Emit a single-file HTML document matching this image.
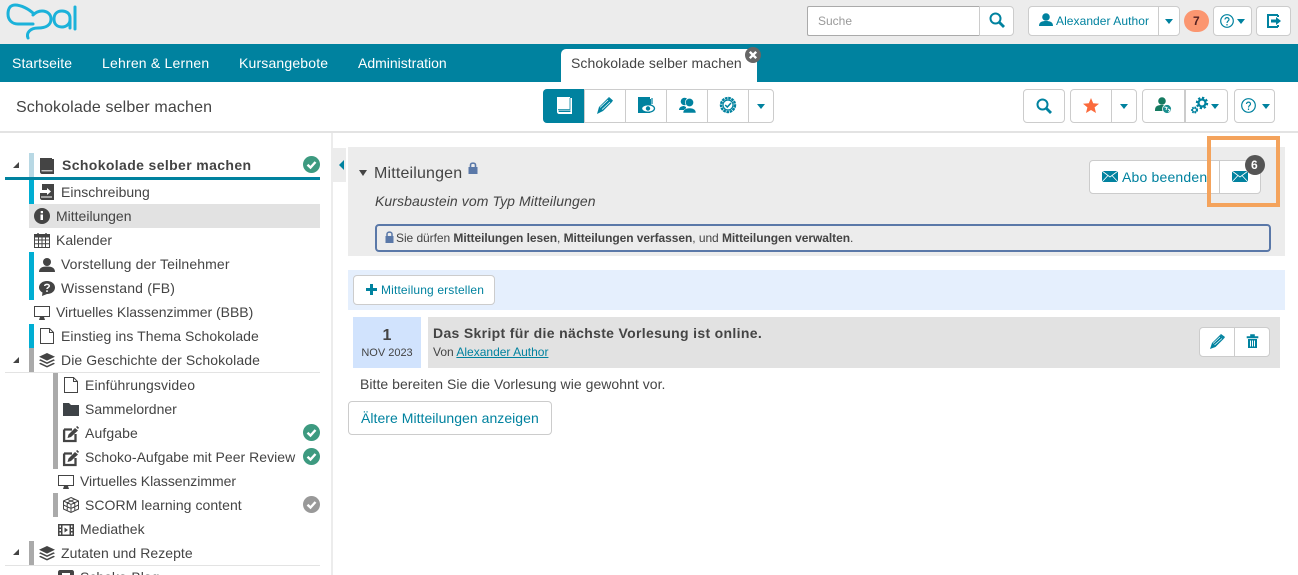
<!DOCTYPE html>
<html lang="de"><head><meta charset="utf-8"><title>Schokolade selber machen</title>
<style>
html,body{margin:0;padding:0;width:1298px;height:575px;overflow:hidden;background:#fff;font-family:"Liberation Sans",Arial,sans-serif;color:#444;font-size:14px}
#p{position:relative;width:1298px;height:575px;overflow:hidden;background:#fff}
.r{position:absolute;box-sizing:border-box}
.b{position:absolute;box-sizing:border-box;background:#fff;border:1px solid #ccc;border-radius:4px}
.t{position:absolute;white-space:nowrap;line-height:20px;font-size:14px;color:#444}
.n{position:absolute;white-space:nowrap;line-height:20px;font-size:14px;color:#fff;top:53px}
svg{position:absolute;overflow:visible}
.c{width:0;height:0;border-left:4.5px solid transparent;border-right:4.5px solid transparent;border-top:5px solid #00829f;position:absolute}
.tri{position:absolute;width:0;height:0;border-left:6px solid transparent;border-bottom:6px solid #444;left:13px}
</style></head><body><div id="p">
<div class="r" style="left:0;top:0;width:1298px;height:44px;background:#ececec"></div>
<div class="r" style="left:0;top:44px;width:1298px;height:38px;background:#00829f"></div>
<div class="r" style="left:0;top:131px;width:1298px;height:2px;background:#e3e3e3"></div>

<svg style="left:0;top:0" width="85" height="44" fill="none" stroke="#1bb2da" stroke-width="3" stroke-linecap="round"><path d="M34 14C29 9 21 5 15 5C10 5 8 9 8 14C8 20 12 24 18 24L33 24"/><path d="M28 38C26 33 30 28 38 28C46 28 51 25 51 19C51 14 47 11 42 11C38 11 35 13 33 15"/><path d="M70 28V18C70 13 66 11 62 11C57 11 54 14 54 19C54 24 57 27 62 27C66 27 70 24 70 20"/><path d="M75 7V29"/></svg>

<div class="r" style="left:807px;top:6px;width:173px;height:30px;background:#fff;border:1px solid #aaa;border-right:1px solid #bbb;border-radius:2px 0 0 2px"></div>
<div class="t" style="left:818px;top:11px;font-size:12px;color:#999">Suche</div>
<div class="b" style="left:979px;top:6px;width:35px;height:30px;border-radius:0 4px 4px 0"></div>
<svg style="left:989px;top:12px" width="16" height="16" fill="none" stroke="#00829f" stroke-width="2"><circle cx="6.5" cy="6.5" r="5"/><path d="M10 10L15 15" stroke-width="2.8"/></svg>
<div class="b" style="left:1028px;top:6px;width:152px;height:30px"></div>
<div class="r" style="left:1158px;top:6px;width:1px;height:30px;background:#ccc"></div>
<svg style="left:1039px;top:13px" width="14" height="13" fill="#00829f"><circle cx="7" cy="4" r="3.8"/><path d="M0 13C0 9 3 8 7 8S14 9 14 13Z"/></svg>
<div class="t" style="left:1056px;top:11px;font-size:12px;color:#00829f;letter-spacing:.06px">Alexander Author</div>
<div class="c" style="left:1165px;top:19px"></div>
<div class="r" style="left:1184px;top:10px;width:25px;height:22px;background:#fb9670;border-radius:11px"></div>
<div class="t" style="left:1193px;top:11px;font-size:12px;font-weight:bold;color:#522">7</div>
<div class="b" style="left:1213px;top:6px;width:39px;height:30px"></div>
<svg style="left:1220px;top:14px" width="14" height="14" fill="none" stroke="#00829f" stroke-width="1.2"><circle cx="7" cy="7" r="6.3"/><path d="M5 5.5C5 3 9 3 9 5.5C9 7 7 7 7 9M7 10V11.500"/></svg>
<div class="c" style="left:1237px;top:19px"></div>
<div class="b" style="left:1256px;top:6px;width:35px;height:30px"></div>
<svg style="left:1267px;top:14px" width="15" height="14" fill="none" stroke="#00829f" stroke-width="2"><path d="M11 1H1V13H11M11 1V3M11 11V13"/><path d="M4 7H9" stroke-width="3"/><path d="M9 3L14 7L9 11Z" fill="#00829f" stroke="none"/></svg>

<div class="n" style="left:12px;letter-spacing:.1px">Startseite</div>
<div class="n" style="left:102px;letter-spacing:.2px">Lehren &amp; Lernen</div>
<div class="n" style="left:239px;letter-spacing:.17px">Kursangebote</div>
<div class="n" style="left:358px">Administration</div>
<div class="r" style="left:561px;top:49px;width:196px;height:33px;background:#fff;border-radius:5px 5px 0 0"></div>
<div class="t" style="left:571px;top:53px;letter-spacing:.08px">Schokolade selber machen</div>
<svg style="left:745px;top:47px" width="16" height="16"><circle cx="8" cy="8" r="8" fill="#666"/><path d="M4.8 4.8L11.2 11.2M11.2 4.8L4.8 11.2" stroke="#fff" stroke-width="2.4"/></svg>

<div class="t" style="left:16px;top:97px;font-size:16px;line-height:22px;letter-spacing:.13px">Schokolade selber machen</div>

<div class="b" style="left:543px;top:89px;width:231px;height:34px"></div>
<div class="r" style="left:543px;top:89px;width:41px;height:34px;background:#00829f;border-radius:4px 0 0 4px"></div>
<div class="r" style="left:625px;top:89px;width:1px;height:34px;background:#ccc"></div>
<div class="r" style="left:584px;top:89px;width:1px;height:34px;background:#ccc"></div>
<div class="r" style="left:666px;top:89px;width:1px;height:34px;background:#ccc"></div>
<div class="r" style="left:707px;top:89px;width:1px;height:34px;background:#ccc"></div>
<div class="r" style="left:748px;top:89px;width:1px;height:34px;background:#ccc"></div>
<svg style="left:557px;top:97px" width="15" height="17" fill="#fff"><path d="M0 0H13V1H15V17H2C1 17 0 16 0 15Z"/><path d="M1.500 13.500H13.500V15H2C1.500 15 1.500 13.500 1.500 13.500Z" fill="#00829f"/><path d="M13 1V12.500H1" fill="none" stroke="#00829f" stroke-width=".8"/></svg>
<svg style="left:597px;top:97px" width="16" height="17" fill="#00829f"><path d="M0 17L2 10L11 1L15.5 4.5L6 14Z"/><path d="M3 10.5L11 3M5 12.5L13 5" stroke="#fff" stroke-width=".7"/><path d="M12 0L16 3.5L15 4.5L11 1Z"/></svg>
<svg style="left:638px;top:97px" width="17" height="17"><path d="M0 0H12V2H13V8H8L2 13L4 16H0Z" fill="#00829f"/><path d="M0 0H12V16H0Z" fill="#00829f"/><path d="M14 1V7" stroke="#00829f" stroke-width="1.200"/><ellipse cx="10" cy="11.500" rx="6.500" ry="3.800" fill="#fff" stroke="#00829f" stroke-width="1.300"/><circle cx="10" cy="11.500" r="2.200" fill="#00829f"/></svg>
<svg style="left:679px;top:97px" width="17" height="16" fill="#00829f"><circle cx="5.500" cy="4.500" r="3.800"/><path d="M0 13C0 10 3 9 5 9L7 10L4 13Z"/><path d="M3 13H7V10H3Z"/><circle cx="10.500" cy="5.500" r="4.200" stroke="#fff" stroke-width=".7"/><path d="M4 16C4 12.500 7 11 10.500 11S17 12.500 17 16Z" stroke="#fff" stroke-width=".5"/></svg>
<svg style="left:720px;top:97px" width="16" height="16"><circle cx="8" cy="8" r="7" fill="none" stroke="#00829f" stroke-width="2.4" stroke-dasharray="2.6 .7"/><circle cx="8" cy="8" r="5" fill="none" stroke="#00829f" stroke-width="1.2"/><path d="M5.2 8L7.3 10L11 6" fill="none" stroke="#00829f" stroke-width="1.5"/></svg>
<div class="c" style="left:757px;top:104px"></div>

<div class="b" style="left:1023px;top:89px;width:42px;height:34px"></div>
<svg style="left:1036px;top:98px" width="16" height="16" fill="none" stroke="#00829f" stroke-width="2"><circle cx="6.5" cy="6.5" r="5"/><path d="M10 10L15 15" stroke-width="2.8"/></svg>
<div class="b" style="left:1070px;top:89px;width:67px;height:34px"></div>
<div class="r" style="left:1111px;top:89px;width:1px;height:34px;background:#ccc"></div>
<svg style="left:1083px;top:98px" width="16" height="15" fill="#fb6a3c"><path d="M8 0L10.2 5.3L16 5.7L11.6 9.4L13 15L8 12L3 15L4.4 9.4L0 5.7L5.8 5.3Z"/></svg>
<div class="c" style="left:1120px;top:104px"></div>
<div class="b" style="left:1142px;top:89px;width:86px;height:34px"></div>
<div class="r" style="left:1184px;top:89px;width:2px;height:34px;background:#ccc"></div>
<svg style="left:1155px;top:97px" width="17" height="17"><circle cx="7" cy="4" r="3.800" fill="#157a60"/><path d="M0 13C0 9 3 8 7 8C10 8 11 9 11 9L8 14H0Z" fill="#157a60"/><circle cx="12" cy="12" r="4.500" fill="#1a8f8f" stroke="#fff" stroke-width=".8"/><path d="M9.500 10L12 10.500L11 13M13 12L15 13L13.500 15" fill="none" stroke="#fff"/></svg>
<svg style="left:1191px;top:97px" width="17" height="17" fill="none" stroke="#00829f"><circle cx="11" cy="6" r="5" stroke-width="2.400" stroke-dasharray="2.200 1.700"/><circle cx="11" cy="6" r="3.500" stroke-width="2.200"/><circle cx="3.500" cy="13" r="2.800" stroke-width="1.500" stroke-dasharray="1.500 1.100"/><circle cx="3.500" cy="13" r="2" stroke-width="1.300"/></svg>
<div class="c" style="left:1211px;top:104px"></div>
<div class="b" style="left:1234px;top:89px;width:41px;height:34px"></div>
<svg style="left:1241px;top:98px" width="15" height="15" fill="none" stroke="#00829f" stroke-width="1.2"><circle cx="7.5" cy="7.5" r="6.8"/><path d="M5.5 6C5.5 3.5 9.5 3.5 9.5 6C9.5 7.5 7.5 7.5 7.5 9.5M7.5 10.5V12"/></svg>
<div class="c" style="left:1262px;top:104px"></div>

<!-- sidebar -->
<div class="r" style="left:331px;top:133px;width:2px;height:442px;background:#ececec"></div>
<div class="r" style="left:333px;top:148px;width:13px;height:34px;background:#ececec"></div>
<div class="r" style="left:339px;top:160px;width:0;height:0;border-top:5px solid transparent;border-bottom:5px solid transparent;border-right:5px solid #00829f"></div>

<div class="tri" style="top:162px"></div>
<div class="r" style="left:29px;top:153px;width:5px;height:24px;background:#b8d8e4"></div>
<div class="r" style="left:5px;top:177px;width:315px;height:3px;background:#00829f"></div>
<svg style="left:40px;top:158px" width="14" height="16" fill="#444"><path d="M0 0H12V1H14V16H2C1 16 0 15 0 14Z"/><path d="M1.5 12.8H12.5" stroke="#fff"/></svg>
<div class="t" style="left:62px;top:155px;font-weight:bold;letter-spacing:.37px">Schokolade selber machen</div>
<svg style="left:303px;top:156px" width="17" height="17"><circle cx="8.5" cy="8.5" r="8.5" fill="#3d9a80"/><path d="M4.5 8.7L7.5 11.5L12.5 6" fill="none" stroke="#fff" stroke-width="2.4"/></svg>

<div class="r" style="left:29px;top:180px;width:5px;height:24px;background:#00aed3"></div>
<svg style="left:40px;top:184px" width="14" height="16" fill="#444"><path d="M2 0H14V16H2C1 16 0 15 0 14V9H7V11L11 7.5L7 4V6H2Z"/><path d="M1 13H12" stroke="#fff"/></svg>
<div class="t" style="left:61px;top:182px">Einschreibung</div>

<div class="r" style="left:29px;top:204px;width:291px;height:24px;background:#e2e2e2"></div>
<svg style="left:34px;top:208px" width="16" height="16"><circle cx="8" cy="8" r="8" fill="#444"/><path d="M6.5 6.5H9V12H6.5ZM6.7 3H9V5.2H6.7Z" fill="#fff"/></svg>
<div class="t" style="left:56px;top:206px">Mitteilungen</div>

<svg style="left:34px;top:233px" width="16" height="15" fill="none" stroke="#444"><path d="M.5 3H15.5V14.5H.5ZM.5 7H15.5M.5 10.7H15.5M4.5 3V14.5M8 3V14.5M11.5 3V14.5"/><path d="M.5 1.5H15.5V4H.5Z" fill="#444"/><path d="M4 0V2M12 0V2" stroke-width="1.4"/></svg>
<div class="t" style="left:56px;top:230px">Kalender</div>

<div class="r" style="left:29px;top:252px;width:5px;height:48px;background:#00aed3"></div>
<svg style="left:39px;top:258px" width="16" height="14" fill="#444"><circle cx="8" cy="4" r="4"/><path d="M0 14C0 10 3 8.500 8 8.500S16 10 16 14Z"/></svg>
<div class="t" style="left:61px;top:254px;letter-spacing:.12px">Vorstellung der Teilnehmer</div>
<svg style="left:39px;top:281px" width="16" height="15"><path d="M8 0C12.500 0 16 2.700 16 6.500S12.500 13 8 13L3 15L3.500 11.500C1.500 10.500 0 8.500 0 6.500C0 2.700 3.500 0 8 0Z" fill="#444"/><path d="M5.700 5C5.700 2.800 10.300 2.800 10.300 5C10.300 6.500 8 6.500 8 8M8 9.200V11" fill="none" stroke="#fff" stroke-width="1.500"/></svg>
<div class="t" style="left:61px;top:278px;letter-spacing:.18px">Wissenstand (FB)</div>

<svg style="left:34px;top:306px" width="16" height="14"><path d="M.5 .5H15.500V10.500H.5Z" fill="none" stroke="#444"/><path d="M5 14L6 11H10L11 14Z" fill="#444"/></svg>
<div class="t" style="left:56px;top:302px;letter-spacing:-.03px">Virtuelles Klassenzimmer (BBB)</div>

<div class="r" style="left:29px;top:324px;width:5px;height:24px;background:#00aed3"></div>
<svg style="left:40px;top:328px" width="14" height="16" fill="none" stroke="#444"><path d="M.5 .5H9.500L13.500 4.500V15.500H.5ZM9.500 .5V4.500H13.500"/></svg>
<div class="t" style="left:61px;top:326px;letter-spacing:.07px">Einstieg ins Thema Schokolade</div>

<div class="tri" style="top:357px"></div>
<div class="r" style="left:29px;top:348px;width:5px;height:24px;background:#aaa"></div>
<div class="r" style="left:5px;top:372px;width:315px;height:1px;background:#e3e3e3"></div>
<svg style="left:39px;top:353px" width="16" height="15" fill="#444"><path d="M8 0L16 3.800L8 7.600L0 3.800Z"/><path d="M1.500 6.300L8 9.400L14.500 6.300L16 7.300L8 11L0 7.300Z"/><path d="M1.500 9.800L8 12.900L14.500 9.800L16 10.800L8 14.500L0 10.800Z"/></svg>
<div class="t" style="left:61px;top:350px;letter-spacing:.1px">Die Geschichte der Schokolade</div>

<div class="r" style="left:53px;top:373px;width:5px;height:96px;background:#aaa"></div>
<svg style="left:64px;top:377px" width="14" height="16" fill="none" stroke="#444"><path d="M.5 .5H9.500L13.500 4.500V15.500H.5ZM9.500 .5V4.500H13.500"/></svg>
<div class="t" style="left:85px;top:375px;letter-spacing:.12px">Einführungsvideo</div>
<svg style="left:63px;top:403px" width="16" height="13" fill="#3e4347"><path d="M0 0H6L8 2H16V13H0Z"/></svg>
<div class="t" style="left:85px;top:399px">Sammelordner</div>
<svg style="left:63px;top:426px" width="16" height="16" fill="none" stroke="#444"><path d="M1 3.500H9M1.100 3.500V15H12.500V8" stroke-width="2.300"/><path d="M4.500 12L5.500 8.500L12 2L15 4.500L8 11Z" fill="#444" stroke="none"/><path d="M13 1L14.200 0L16 1.800L15 3Z" fill="#444" stroke="none"/></svg>
<div class="t" style="left:85px;top:423px;letter-spacing:.1px">Aufgabe</div>
<svg style="left:303px;top:424px" width="17" height="17"><circle cx="8.500" cy="8.500" r="8.500" fill="#3d9a80"/><path d="M4.500 8.700L7.500 11.500L12.500 6" fill="none" stroke="#fff" stroke-width="2.400"/></svg>
<svg style="left:63px;top:450px" width="16" height="16" fill="none" stroke="#444"><path d="M1 3.500H9M1.100 3.500V15H12.500V8" stroke-width="2.300"/><path d="M4.500 12L5.500 8.500L12 2L15 4.500L8 11Z" fill="#444" stroke="none"/><path d="M13 1L14.200 0L16 1.800L15 3Z" fill="#444" stroke="none"/></svg>
<div class="t" style="left:85px;top:447px;letter-spacing:.03px">Schoko-Aufgabe mit Peer Review</div>
<svg style="left:303px;top:448px" width="17" height="17"><circle cx="8.500" cy="8.500" r="8.500" fill="#3d9a80"/><path d="M4.500 8.700L7.500 11.500L12.500 6" fill="none" stroke="#fff" stroke-width="2.400"/></svg>

<svg style="left:58px;top:475px" width="16" height="14"><path d="M.5 .5H15.500V10.500H.5Z" fill="none" stroke="#444"/><path d="M5 14L6 11H10L11 14Z" fill="#444"/></svg>
<div class="t" style="left:80px;top:471px;letter-spacing:-.04px">Virtuelles Klassenzimmer</div>

<div class="r" style="left:53px;top:493px;width:5px;height:24px;background:#aaa"></div>
<svg style="left:63px;top:497px" width="16" height="16" fill="none" stroke="#444"><path d="M8 .5L15.500 4V12L8 15.500L.5 12V4ZM.5 4L8 7.500L15.500 4M8 7.500V15.500M4.200 2.200L11.800 5.800M11.800 2.200L4.200 5.800M.5 8L8 11.500L15.500 8M4.200 5.800V13.700M11.800 5.800V13.700"/></svg>
<div class="t" style="left:85px;top:495px;letter-spacing:.05px">SCORM learning content</div>
<svg style="left:303px;top:496px" width="17" height="17"><circle cx="8.500" cy="8.500" r="8.500" fill="#999"/><path d="M4.500 8.700L7.500 11.500L12.500 6" fill="none" stroke="#fff" stroke-width="2.400"/></svg>

<svg style="left:58px;top:524px" width="16" height="12"><path d="M0 0H16V12H0Z" fill="#444"/><path d="M4.500 1.500H11.500V10.500H4.500Z" fill="#fff"/><path d="M1.500 1.500H3V3.500H1.500ZM1.500 5H3V7H1.500ZM1.500 8.500H3V10.500H1.500ZM13 1.500H14.500V3.500H13ZM13 5H14.500V7H13ZM13 8.500H14.500V10.500H13Z" fill="#fff"/><path d="M6.500 3.500L10 6L6.500 8.500Z" fill="#444"/></svg>
<div class="t" style="left:80px;top:519px">Mediathek</div>

<div class="tri" style="top:549px"></div>
<div class="r" style="left:29px;top:541px;width:5px;height:24px;background:#aaa"></div>
<div class="r" style="left:5px;top:565px;width:315px;height:1px;background:#e3e3e3"></div>
<svg style="left:39px;top:546px" width="16" height="15" fill="#444"><path d="M8 0L16 3.800L8 7.600L0 3.800Z"/><path d="M1.500 6.300L8 9.400L14.500 6.300L16 7.300L8 11L0 7.300Z"/><path d="M1.500 9.800L8 12.900L14.500 9.800L16 10.800L8 14.500L0 10.800Z"/></svg>
<div class="t" style="left:61px;top:543px;letter-spacing:.05px">Zutaten und Rezepte</div>
<svg style="left:58px;top:570px" width="16" height="14"><path d="M2 0H14C15 0 16 1 16 2V14H0V2C0 1 1 0 2 0Z" fill="#444"/><path d="M4 3H12V7H4Z" fill="#fff"/></svg>
<div class="t" style="left:80px;top:567px">Schoko-Blog</div>

<!-- main -->
<div class="r" style="left:348px;top:147px;width:937px;height:109px;background:#ececec"></div>
<div class="r" style="left:359px;top:170px;width:0;height:0;border-left:4.500px solid transparent;border-right:4.500px solid transparent;border-top:6px solid #444"></div>
<div class="t" style="left:374px;top:164px;font-size:16px;letter-spacing:.17px">Mitteilungen</div>
<svg style="left:468px;top:162px" width="10" height="12"><path d="M2.500 5V3C2.500 .5 7.500 .5 7.500 3V5" fill="none" stroke="#5a78a8" stroke-width="1.600"/><path d="M.5 5H9.500V12H.5Z" fill="#5a78a8"/></svg>
<div class="t" style="left:375px;top:191px;font-style:italic;letter-spacing:.09px">Kursbaustein vom Typ Mitteilungen</div>

<div class="r" style="left:375px;top:224px;width:896px;height:28px;border:2px solid #5a78a8;border-radius:4px"></div>
<svg style="left:385px;top:231px" width="9" height="12"><path d="M2 5V3C2 .5 7 .5 7 3V5" fill="none" stroke="#5a78a8" stroke-width="1.500"/><path d="M.5 5H8.500V12H.5Z" fill="#5a78a8"/></svg>
<div class="t" style="left:396px;top:228px;font-size:12px;letter-spacing:-.06px">Sie dürfen <b>Mitteilungen lesen</b>, <b>Mitteilungen verfassen</b>, und <b>Mitteilungen verwalten</b>.</div>

<div class="b" style="left:1089px;top:160px;width:172px;height:34px"></div>
<div class="r" style="left:1219px;top:160px;width:1px;height:34px;background:#ccc"></div>
<svg style="left:1102px;top:171px" width="16" height="11"><path d="M0 0H16V11H0Z" fill="#00829f"/><path d="M0 0L8 6L16 0M0 11L6 4.500M16 11L10 4.500" fill="none" stroke="#fff" stroke-width=".8"/></svg>
<div class="t" style="left:1122px;top:167px;color:#00829f;letter-spacing:.18px">Abo beenden</div>
<svg style="left:1232px;top:171px" width="16" height="11"><path d="M0 0H16V11H0Z" fill="#00829f"/><path d="M0 0L8 6L16 0M0 11L6 4.500M16 11L10 4.500" fill="none" stroke="#fff" stroke-width=".8"/></svg>
<div class="r" style="left:1245px;top:155px;width:20px;height:20px;background:#555;border-radius:50%"></div>
<div class="t" style="left:1251px;top:155px;font-size:12px;font-weight:bold;color:#fff">6</div>
<div class="r" style="left:1207px;top:136px;width:73px;height:71px;border:4px solid #f4a35c"></div>

<div class="r" style="left:348px;top:270px;width:937px;height:40px;background:#e5effd"></div>
<div class="b" style="left:353px;top:275px;width:142px;height:30px"></div>
<svg style="left:366px;top:284px" width="11" height="11"><path d="M4 0H7V4H11V7H7V11H4V7H0V4H4Z" fill="#00829f"/></svg>
<div class="t" style="left:381px;top:280px;font-size:12px;color:#00829f;letter-spacing:.15px">Mitteilung erstellen</div>

<div class="r" style="left:353px;top:317px;width:68px;height:51px;background:#d1e3fd"></div>
<div class="t" style="left:353px;width:68px;text-align:center;top:326px;font-size:16px;font-weight:bold">1</div>
<div class="t" style="left:353px;width:68px;text-align:center;top:343px;font-size:11px">NOV 2023</div>
<div class="r" style="left:428px;top:317px;width:852px;height:51px;background:#e2e2e2"></div>
<div class="t" style="left:433px;top:323px;font-weight:bold;letter-spacing:.33px">Das Skript für die nächste Vorlesung ist online.</div>
<div class="t" style="left:433px;top:342px;font-size:12px">Von <span style="color:#00829f;text-decoration:underline">Alexander Author</span></div>
<div class="b" style="left:1199px;top:327px;width:71px;height:30px"></div>
<div class="r" style="left:1234px;top:327px;width:1px;height:30px;background:#ccc"></div>
<svg style="left:1210px;top:334px" width="15" height="15" fill="#00829f"><path d="M0 15L2 9L10 1L14 4.500L5.500 13Z"/><path d="M3 9.500L10 3M4.500 11L12 4.500" stroke="#fff" stroke-width=".6"/><path d="M11 0L15 3L14 4.500L10 1Z"/></svg>
<svg style="left:1247px;top:334px" width="11" height="14"><path d="M0 2.500H11V4H0ZM3.500 2.500V.5H7.500V2.500" fill="#00829f" stroke="#00829f" stroke-width=".6"/><path d="M1 5H10V14H1Z" fill="#00829f"/><path d="M3.500 6.500V12.500M5.500 6.500V12.500M7.500 6.500V12.500" stroke="#fff"/></svg>

<div class="t" style="left:360px;top:374px;letter-spacing:.04px">Bitte bereiten Sie die Vorlesung wie gewohnt vor.</div>
<div class="b" style="left:348px;top:401px;width:204px;height:34px"></div>
<div class="t" style="left:361px;top:408px;color:#00829f;letter-spacing:.04px">Ältere Mitteilungen anzeigen</div>
</div></body></html>
